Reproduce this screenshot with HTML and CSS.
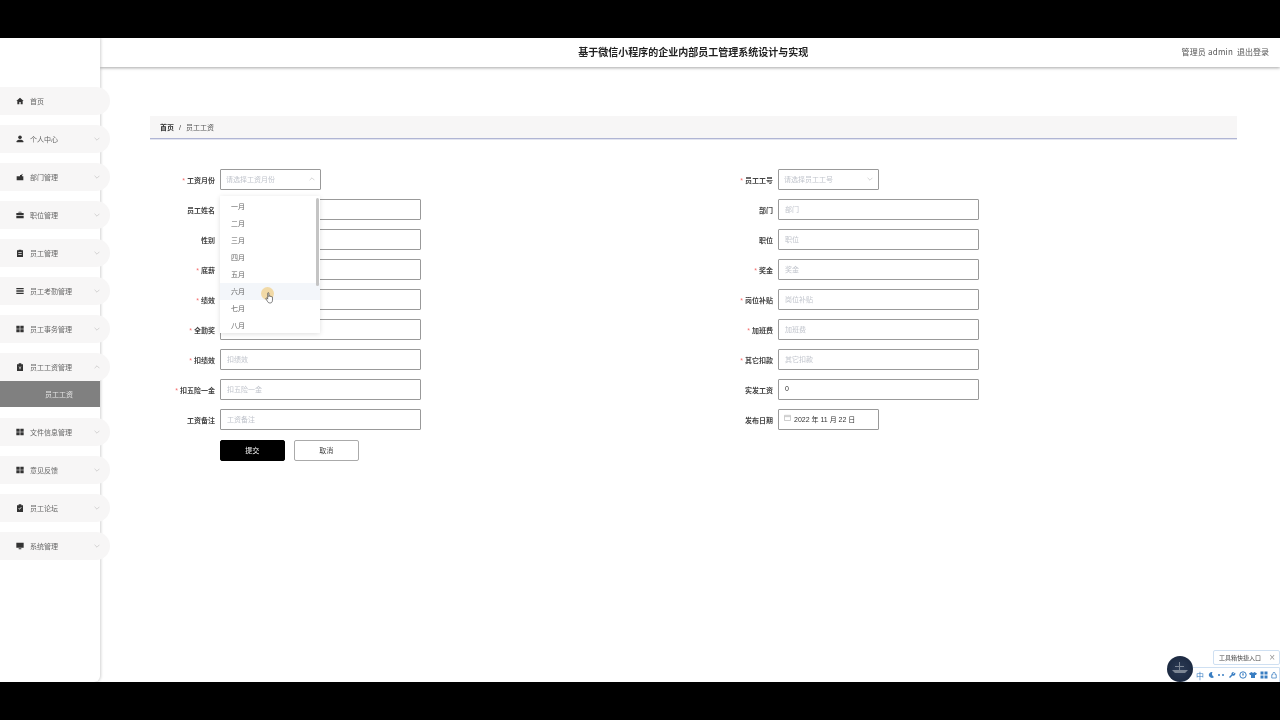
FILE: index.html
```html
<!DOCTYPE html>
<html lang="zh-CN">
<head>
    <meta charset="UTF-8">
    <title>员工工资</title>
    <link rel="stylesheet" href="styles.css">
</head>
<body>
    <svg class="icon-defs" width="0" height="0">
        <symbol id="i-home" viewBox="0 0 12 12"><path d="M6 1 .5 6H2v5h3V7.500h2V11h3V6h1.500z"/></symbol>
        <symbol id="i-user" viewBox="0 0 12 12"><circle cx="6" cy="3.500" r="2.700"/><path d="M1 11V9.500C1 8 3 7 6 7s5 1 5 2.500V11z"/></symbol>
        <symbol id="i-dept" viewBox="0 0 12 12"><path d="M1 5h5V3h2l1-2 1 1-1 2v1h2v6H1z"/></symbol>
        <symbol id="i-case" viewBox="0 0 12 12"><path d="M4 1h4v2h3.500v3.500H.500V3H4zM5 2v1h2V2zM.500 7.500h11V11H.500z"/></symbol>
        <symbol id="i-note" viewBox="0 0 12 12"><path d="M1.500 2H4V1h4v1h2.500v10h-9zM3.500 5v1h5V5zM3.500 8v1h5V8z"/></symbol>
        <symbol id="i-list" viewBox="0 0 12 12"><path d="M.500 1.500h11v2H.500zM.500 5h11v2H.500zM.500 8.500h11v2H.500z"/></symbol>
        <symbol id="i-grid" viewBox="0 0 12 12"><path d="M.500 1h5v4.500h-5zM6.500 1h5v4.500h-5zM.500 6.500h5V11h-5zM6.500 6.500h5V11h-5z"/></symbol>
        <symbol id="i-salary" viewBox="0 0 12 12"><path d="M1.500 2H4V.500h4V2h2.500v10h-9zM4.500 5 6 7 7.500 5l.5.500L6.700 7.500v2H5.300v-2L4 5.500z" fill-rule="evenodd"/></symbol>
        <symbol id="i-board" viewBox="0 0 12 12"><path d="M1.500 2H4V.500h4V2h2.500v10h-9zM3.500 6.500 5.300 8.500 8.500 5l-.7-.6-2.500 2.700-1.100-1.200z" fill-rule="evenodd"/></symbol>
        <symbol id="i-screen" viewBox="0 0 12 12"><path d="M.500 1h11v7.500H.500zM4 9.500h4V11H4z"/></symbol>
        <symbol id="i-down" viewBox="0 0 10 6"><path d="M1 1l4 4 4-4" fill="none" stroke="currentColor" stroke-width="1"/></symbol>
    </svg>

    <div class="stage">
        <aside class="sidebar">
            <ul class="menu">
                <li class="menu-item"><svg class="menu-icon"><use href="#i-home"/></svg>首页</li>
                <li class="menu-item"><svg class="menu-icon"><use href="#i-user"/></svg>个人中心<svg class="chevron"><use href="#i-down"/></svg></li>
                <li class="menu-item"><svg class="menu-icon"><use href="#i-dept"/></svg>部门管理<svg class="chevron"><use href="#i-down"/></svg></li>
                <li class="menu-item"><svg class="menu-icon"><use href="#i-case"/></svg>职位管理<svg class="chevron"><use href="#i-down"/></svg></li>
                <li class="menu-item"><svg class="menu-icon"><use href="#i-note"/></svg>员工管理<svg class="chevron"><use href="#i-down"/></svg></li>
                <li class="menu-item"><svg class="menu-icon"><use href="#i-list"/></svg>员工考勤管理<svg class="chevron"><use href="#i-down"/></svg></li>
                <li class="menu-item"><svg class="menu-icon"><use href="#i-grid"/></svg>员工事务管理<svg class="chevron"><use href="#i-down"/></svg></li>
                <li class="menu-item open"><svg class="menu-icon"><use href="#i-salary"/></svg>员工工资管理<svg class="chevron up"><use href="#i-down"/></svg></li>
                <li class="submenu-item">员工工资</li>
                <li class="menu-item"><svg class="menu-icon"><use href="#i-grid"/></svg>文件信息管理<svg class="chevron"><use href="#i-down"/></svg></li>
                <li class="menu-item"><svg class="menu-icon"><use href="#i-grid"/></svg>意见反馈<svg class="chevron"><use href="#i-down"/></svg></li>
                <li class="menu-item"><svg class="menu-icon"><use href="#i-board"/></svg>员工论坛<svg class="chevron"><use href="#i-down"/></svg></li>
                <li class="menu-item"><svg class="menu-icon"><use href="#i-screen"/></svg>系统管理<svg class="chevron"><use href="#i-down"/></svg></li>
            </ul>
        </aside>

        <div class="content">
            <header class="topbar">
                <div class="title">基于微信小程序的企业内部员工管理系统设计与实现</div>
                <div class="user-info"><span class="user-name">管理员 admin</span><span>退出登录</span></div>
            </header>

            <main class="main">
                <div class="breadcrumb"><b>首页</b><i>/</i><span>员工工资</span></div>

                <form class="salary-form">
                    <div class="form-col">
                        <div class="form-row">
                            <label class="required">工资月份</label>
                            <div class="field short select-wrap">
                                <span class="placeholder">请选择工资月份</span><svg class="chevron up"><use href="#i-down"/></svg>
                                <ul class="dropdown">
                                    <li>一月</li>
                                    <li>二月</li>
                                    <li>三月</li>
                                    <li>四月</li>
                                    <li>五月</li>
                                    <li class="hover">六月</li>
                                    <li>七月</li>
                                    <li>八月</li>
                                </ul>
                            </div>
                        </div>
                        <div class="form-row"><label>员工姓名</label><div class="field"></div></div>
                        <div class="form-row"><label>性别</label><div class="field"></div></div>
                        <div class="form-row"><label class="required">底薪</label><div class="field"></div></div>
                        <div class="form-row"><label class="required">绩效</label><div class="field"></div></div>
                        <div class="form-row"><label class="required">全勤奖</label><div class="field"></div></div>
                        <div class="form-row"><label class="required">扣绩效</label><div class="field"><span class="placeholder">扣绩效</span></div></div>
                        <div class="form-row"><label class="required">扣五险一金</label><div class="field"><span class="placeholder">扣五险一金</span></div></div>
                        <div class="form-row"><label>工资备注</label><div class="field"><span class="placeholder">工资备注</span></div></div>
                        <div class="form-row buttons">
                            <button type="button" class="btn btn-primary">提交</button>
                            <button type="button" class="btn">取消</button>
                        </div>
                    </div>

                    <div class="form-col">
                        <div class="form-row">
                            <label class="required">员工工号</label>
                            <div class="field short select-wrap"><span class="placeholder">请选择员工工号</span><svg class="chevron"><use href="#i-down"/></svg></div>
                        </div>
                        <div class="form-row"><label>部门</label><div class="field"><span class="placeholder">部门</span></div></div>
                        <div class="form-row"><label>职位</label><div class="field"><span class="placeholder">职位</span></div></div>
                        <div class="form-row"><label class="required">奖金</label><div class="field"><span class="placeholder">奖金</span></div></div>
                        <div class="form-row"><label class="required">岗位补贴</label><div class="field"><span class="placeholder">岗位补贴</span></div></div>
                        <div class="form-row"><label class="required">加班费</label><div class="field"><span class="placeholder">加班费</span></div></div>
                        <div class="form-row"><label class="required">其它扣款</label><div class="field"><span class="placeholder">其它扣款</span></div></div>
                        <div class="form-row"><label>实发工资</label><div class="field"><span>0</span></div></div>
                        <div class="form-row">
                            <label>发布日期</label>
                            <div class="field short date-field">
                                <svg class="cal-icon" viewBox="0 0 8 8"><path d="M.5 1.500h7v6h-7zM.5 3h7" fill="none" stroke="#c4c4c4"/></svg>
                                <span>2022 年 11 月 22 日</span>
                            </div>
                        </div>
                    </div>
                </form>
            </main>
        </div>

        <div class="pointer">
            <span class="pointer-dot"></span>
            <svg class="pointer-hand" viewBox="0 0 10 13"><path d="M3 1.200c0-.8 1.300-.8 1.300 0V5l.2-.6c.3-.6 1.200-.4 1.200.2l.1.3c.3-.5 1.200-.4 1.200.3.400-.4 1.300-.2 1.300.5V9c0 1.500-.8 3-2.200 3H5c-1 0-1.500-.6-2-1.400L1 7.500c-.4-.8.6-1.300 1.200-.7l.8 1z" fill="#fff" stroke="#333" stroke-width=".7"/></svg>
        </div>

        <div class="toolbox">
            <div class="toolbox-tip"><span>工具箱快捷入口</span><em>×</em></div>
            <div class="toolbox-bar">
                <span class="tool-zh">中</span>
                <svg viewBox="0 0 8 8"><path d="M5.500 1a3 3 0 1 0 1.500 5A3.500 3.500 0 0 1 5.500 1z"/></svg>
                <svg viewBox="0 0 8 8"><circle cx="2" cy="4" r="1"/><circle cx="6" cy="4" r="1"/></svg>
                <svg viewBox="0 0 8 8"><path d="M7 1.500 5.500 3 5 2.500 6 1a2 2 0 0 0-2.500 2.500L1 6l1 1 2.500-2.500A2 2 0 0 0 7 1.500z"/></svg>
                <svg viewBox="0 0 8 8"><circle cx="4" cy="4" r="3.200" fill="none" stroke="#3a7ec2"/><path d="M3 2.500h2L4 5.500z"/></svg>
                <svg viewBox="0 0 8 8"><path d="M2.500 1 4 2l1.500-1L8 2.500 7 4H6v3H2V4H1L0 2.500z"/></svg>
                <svg viewBox="0 0 8 8"><path d="M.5.500h3v3h-3zM4.500.500h3v3h-3zM.5 4.500h3v3h-3zM4.500 4.500h3v3h-3z"/></svg>
                <svg class="tool-lock" viewBox="0 0 8 8"><path d="M2.500 3.500V2a1.500 1.500 0 0 1 3 0v1.500H7V8H1V3.500z" fill="none" stroke="#3a7ec2"/></svg>
            </div>
            <div class="toolbox-avatar">
                <svg viewBox="0 0 26 26"><path d="M5 14h16l-3 3H8zM12 6h1v8h-1zM8 10h9v1H8z" fill="#7c8694"/></svg>
            </div>
        </div>
    </div>
</body>
</html>
```

FILE: styles.css
```css
* {
    box-sizing: border-box;
    margin: 0;
    padding: 0;
    font-family: "Liberation Sans", "Noto Sans CJK SC", sans-serif;
}

body {
    background: #000;
    padding-top: 38px;
    height: 720px;
    overflow: hidden;
}

ul {
    list-style: none;
}

.icon-defs {
    position: absolute;
}

.stage {
    position: relative;
    display: flex;
    height: 644px;
    background: #fff;
    overflow: hidden;
    filter: blur(0.4px);
}

/* sidebar */
.sidebar {
    position: relative;
    z-index: 2;
    flex: none;
    width: 100px;
    background: #fff;
    border-bottom-right-radius: 6px;
    box-shadow: 1px 0 3px rgba(0, 0, 0, 0.18);
}

.menu {
    padding-top: 49px;
}

.menu-item {
    position: relative;
    display: flex;
    align-items: center;
    width: 110px;
    height: 28px;
    margin-bottom: 10px;
    padding-left: 16px;
    padding-bottom: 1px;
    background: #f7f6f6;
    border-radius: 0 14px 14px 0;
    color: #666;
    font-size: 7px;
}

.menu-item.open {
    margin-bottom: 0;
}

.menu-icon {
    flex: none;
    width: 8px;
    height: 8px;
    margin-right: 6px;
    fill: #333;
}

.chevron {
    position: absolute;
    right: 10px;
    top: 50%;
    width: 6px;
    height: 4px;
    margin-top: -2px;
    color: #bbb;
}

.chevron.up {
    transform: rotate(180deg);
}

.submenu-item {
    width: 100px;
    height: 26px;
    margin-bottom: 11px;
    padding-left: 45px;
    background: #808080;
    color: #e4e4e4;
    font-size: 7px;
    line-height: 27px;
}

/* top bar */
.content {
    flex: 1;
    min-width: 0;
}

.topbar {
    position: relative;
    z-index: 1;
    display: flex;
    align-items: center;
    height: 29px;
    background: #fff;
    box-shadow: 0 1px 3px rgba(0, 0, 0, 0.35);
}

.title {
    flex: 1;
    padding: 0 0 2px 105px;
    text-align: center;
    color: #222;
    font-size: 10px;
    font-weight: bold;
}

.user-info {
    display: flex;
    gap: 4px;
    padding: 0 11px 2px 0;
    font-size: 8px;
    white-space: nowrap;
}

.user-info span {
    color: #555;
    font-family: "Noto Sans CJK SC", sans-serif;
}

.user-info .user-name {
    letter-spacing: 0.2px;
}

/* main */
.main {
    padding: 49px 43px 0 50px;
}

.breadcrumb {
    display: flex;
    align-items: center;
    height: 23px;
    padding-left: 10px;
    background: #f7f6f6;
    border-bottom: 1px solid #b0b5d4;
    box-shadow: 0 1px 0 rgba(176, 181, 212, 0.35);
    color: #555;
    font-size: 7px;
}

.breadcrumb b {
    color: #333;
}

.breadcrumb i {
    margin: 0 5px;
    font-style: normal;
    color: #333;
}

.salary-form {
    display: grid;
    grid-template-columns: 558px 1fr;
    margin-top: 30px;
}

.form-col {
    display: flex;
    flex-direction: column;
    gap: 9px;
}

.form-row {
    display: flex;
    align-items: center;
    gap: 5px;
}

.form-row label {
    flex: none;
    width: 65px;
    text-align: right;
    color: #444;
    font-size: 7px;
    font-weight: bold;
}

.required::before {
    content: "*";
    margin-right: 2px;
    color: #f56c6c;
    font-weight: normal;
}

.field {
    position: relative;
    display: flex;
    align-items: center;
    width: 201px;
    height: 21px;
    padding: 0 0 2px 6px;
    background: #fff;
    border: 1px solid #999;
    border-radius: 1px;
    color: #333;
    font-size: 7px;
}

.field.short {
    width: 100.500px;
}

.select-wrap {
    padding-left: 5px;
}

.select-wrap > .chevron {
    right: 5px;
    margin-top: -3px;
}

.placeholder {
    color: #c0c4cc;
    font-size: 7px;
}

.cal-icon {
    flex: none;
    width: 7px;
    height: 7px;
    margin-top: -2px;
    margin-right: 3px;
}

.date-field {
    padding-left: 5px;
}

.dropdown {
    position: absolute;
    z-index: 3;
    top: 26px;
    left: -1px;
    width: 100px;
    height: 137px;
    padding-top: 2px;
    background: #fff;
    box-shadow: 0 1px 5px rgba(0, 0, 0, 0.13);
    overflow: hidden;
}

.dropdown::after {
    content: "";
    position: absolute;
    top: 2px;
    right: 1px;
    width: 3px;
    height: 88px;
    background: #c4c4c4;
    border-radius: 2px;
}

.dropdown li {
    height: 17px;
    padding-left: 11px;
    color: #666;
    font-size: 7px;
    line-height: 17px;
}

.dropdown li.hover {
    background: #f3f6fa;
}

.buttons {
    gap: 9.500px;
    margin-top: 1px;
    padding-left: 70px;
}

.btn {
    width: 64.500px;
    height: 21px;
    padding-bottom: 2px;
    background: #fff;
    border: 1px solid #aaa;
    border-radius: 2px;
    color: #444;
    font-size: 7px;
}

.btn-primary {
    background: #000;
    border-color: #000;
    color: #fff;
}

/* screen recording cursor */
.pointer {
    position: absolute;
    z-index: 4;
    left: 261px;
    top: 249px;
    width: 14px;
    height: 20px;
}

.pointer-dot {
    position: absolute;
    left: 0;
    top: 0;
    width: 13px;
    height: 13px;
    background: rgba(240, 210, 145, 0.8);
    border-radius: 50%;
}

.pointer-hand {
    position: absolute;
    left: 4px;
    top: 5px;
    width: 9px;
    height: 12px;
}

/* toolbox widget, bottom right */
.toolbox {
    position: absolute;
    z-index: 4;
    right: 0;
    bottom: 0;
    width: 113px;
    height: 32px;
}

.toolbox-tip {
    position: absolute;
    right: 0;
    top: 0;
    display: flex;
    align-items: center;
    justify-content: space-between;
    width: 67px;
    height: 15px;
    padding: 0 4px 0 5px;
    background: #fff;
    border: 1px solid #cfe0f2;
    border-radius: 2px;
    color: #444;
    font-size: 6px;
    white-space: nowrap;
}

.toolbox-tip em {
    font-style: normal;
    color: #999;
    font-size: 10px;
}

.toolbox-avatar {
    position: absolute;
    left: 0;
    top: 6px;
    width: 26px;
    height: 26px;
    background: radial-gradient(circle, #2c3b55, #16233a);
    border-radius: 50%;
}

.toolbox-avatar svg {
    display: block;
    width: 26px;
    height: 26px;
}

.toolbox-bar {
    position: absolute;
    left: 13px;
    top: 17px;
    display: flex;
    align-items: center;
    gap: 2.700px;
    width: 100px;
    height: 16px;
    padding-left: 15px;
    background: #fff;
    border: 1px solid #cfe0f2;
    border-radius: 8px 0 0 8px;
}

.toolbox-bar svg {
    flex: none;
    width: 8px;
    height: 8px;
    fill: #3a7ec2;
}

.toolbox-bar .tool-lock {
    width: 6px;
}

.tool-zh {
    color: #3a7ec2;
    font-size: 8px;
}
```
